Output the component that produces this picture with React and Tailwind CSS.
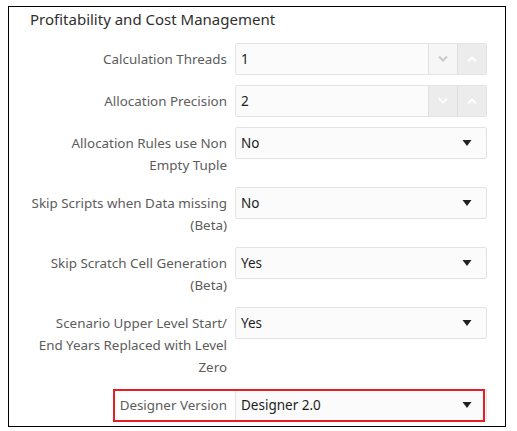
import React from 'react';

const rows = [
  { label: ['Calculation Threads'], type: 'number', value: '1', downBg: 'bg-[#f6f6f6]', downIcon: 'text-[#c9c9c9]' },
  { label: ['Allocation Precision'], type: 'number', value: '2', downBg: 'bg-[#ececec]', downIcon: 'text-white' },
  { label: ['Allocation Rules use Non', 'Empty Tuple'], type: 'select', value: 'No' },
  { label: ['Skip Scripts when Data missing', '(Beta)'], type: 'select', value: 'No' },
  { label: ['Skip Scratch Cell Generation', '(Beta)'], type: 'select', value: 'Yes' },
  { label: ['Scenario Upper Level Start/', 'End Years Replaced with Level', 'Zero'], type: 'select', value: 'Yes' },
  { label: ['Designer Version'], type: 'select', value: 'Designer 2.0' },
];

function Chevron({ up, className }) {
  return (
    <svg width="12" height="8" viewBox="0 0 12 8" className={className}>
      <path
        d={up ? 'M2 6.5 L6 2.5 L10 6.5' : 'M2 1.5 L6 5.5 L10 1.5'}
        fill="none"
        stroke="currentColor"
        strokeWidth="2"
      />
    </svg>
  );
}

function NumberField({ value, downBg, downIcon }) {
  return (
    <div className="flex h-[32px] w-[252px] rounded-[2px] border border-[#e3e3e3] bg-[#fbfbfb]">
      <div className="flex flex-1 items-center pl-[5px] text-[13.5px] text-[#1d1d1d]">{value}</div>
      <div className={`flex w-[29px] items-center justify-center border-l border-[#e0e0e0] ${downBg}`}>
        <Chevron className={downIcon} />
      </div>
      <div className="flex w-[29px] items-center justify-center border-l border-[#dedede] bg-[#ececec]">
        <Chevron up className="text-white" />
      </div>
    </div>
  );
}

function SelectField({ value }) {
  return (
    <div className="flex h-[32px] w-[252px] items-center justify-between rounded-[2px] border border-[#e3e3e3] bg-[#fbfbfb] pl-[5px] pr-[14px]">
      <span className="text-[13.5px] text-[#1d1d1d]">{value}</span>
      <svg width="10" height="6" viewBox="0 0 10 6">
        <path d="M0.5 0 L9.5 0 L5 6 Z" fill="#222" />
      </svg>
    </div>
  );
}

export default function App() {
  return (
    <div className="h-[431px] w-[517px] bg-white pl-[8px] pt-[6px]" style={{ fontFamily: '"Noto Sans", sans-serif' }}>
      <div className="relative h-[421px] w-[498px] border border-black">
        <h2 className="mb-[12px] pl-[21px] text-[15px] leading-[24px] text-[#2f2f2f]">
          Profitability and Cost Management
        </h2>
        <div className="flex flex-col gap-[10px]">
          {rows.map((row, i) => (
            <div key={i} className="flex items-start">
              <div className="ml-[10px] w-[208px] pt-[5px] pb-[1px] text-right text-[13.4px] leading-[22px] text-[#5c5c5c]">
                {row.label.map((line, j) => (
                  <div key={j} className="whitespace-nowrap">{line}</div>
                ))}
              </div>
              <div className="ml-[8px]">
                {row.type === 'number' ? (
                  <NumberField value={row.value} downBg={row.downBg} downIcon={row.downIcon} />
                ) : (
                  <SelectField value={row.value} />
                )}
              </div>
            </div>
          ))}
        </div>
        <div className="pointer-events-none absolute left-[104px] top-[382px] h-[33px] w-[372px] border-2 border-[#e51e26]" />
      </div>
    </div>
  );
}
